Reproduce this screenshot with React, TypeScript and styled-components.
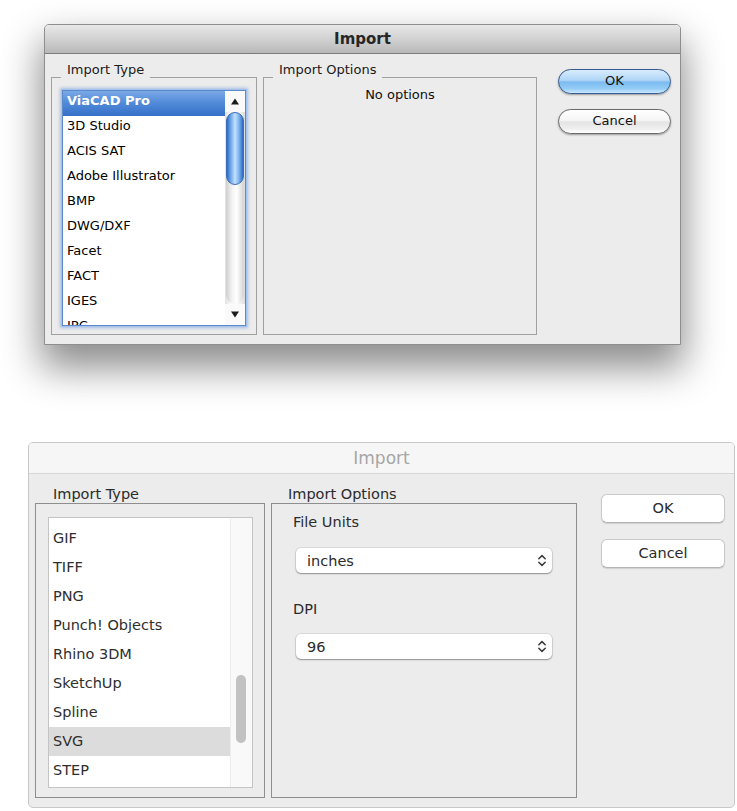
import React from "react";
import styled, { createGlobalStyle } from "styled-components";

const GlobalStyle = createGlobalStyle`
  html, body {
    margin: 0;
    padding: 0;
    background: #fff;
  }
  body {
    font-family: "DejaVu Sans", "Liberation Sans", sans-serif;
  }
  * {
    box-sizing: border-box;
  }
`;

const Page = styled.div`
  width: 737px;
  height: 811px;
  padding-top: 24px;
  overflow: hidden;
`;

/* ---------- Aqua (old) dialog ---------- */

const AquaDialog = styled.div`
  margin-left: 44px;
  width: 637px;
  height: 321px;
  display: flex;
  flex-direction: column;
  background: #ececec;
  border: 1px solid #8e8e8e;
  border-radius: 5px 5px 0 0;
  box-shadow: 0 20px 38px 3px rgba(0, 0, 0, 0.45);
`;

const AquaTitle = styled.div`
  flex: none;
  height: 29px;
  border-bottom: 1px solid #7c7c7c;
  border-radius: 4px 4px 0 0;
  background: linear-gradient(#e8e8e8, #cfcfcf 55%, #b8b8b8);
  text-align: center;
  font-size: 15px;
  font-weight: bold;
  line-height: 28px;
  color: #262626;
`;

const AquaBody = styled.div`
  flex: 1;
  display: flex;
  padding: 9px 9px 9px 6px;
`;

const AquaGroup = styled.fieldset<{ $width: number; $gap?: number }>`
  width: ${(p) => p.$width}px;
  min-width: 0;
  margin: 0 0 0 ${(p) => p.$gap ?? 0}px;
  padding: 0;
  border: 1px solid #a0a0a0;
  display: flex;
  flex-direction: column;
`;

const AquaLegend = styled.legend`
  margin-left: 9px;
  padding: 0 6px 14px;
  font-size: 13px;
  line-height: 14px;
  color: #1a1a1a;
`;

const AquaList = styled.div`
  margin: -1px 10px 0;
  height: 236px;
  display: flex;
  overflow: hidden;
  background: #fff;
  border: 1px solid #5b8bcc;
  box-shadow: 0 0 0 1px #a4c3ec, 0 0 3px 2px rgba(105, 150, 215, 0.55);
`;

const AquaRows = styled.div`
  flex: 1;
  min-width: 0;
`;

const AquaRow = styled.div<{ $selected?: boolean }>`
  height: 25px;
  padding-left: 4px;
  font-size: 13px;
  line-height: 19px;
  white-space: nowrap;
  font-weight: ${(p) => (p.$selected ? "bold" : "normal")};
  color: ${(p) => (p.$selected ? "#fff" : "#000")};
  background: ${(p) =>
    p.$selected
      ? "linear-gradient(#7aa8e6, #5089d8 50%, #3670c8)"
      : "transparent"};
`;

const AquaScroll = styled.div`
  flex: none;
  width: 20px;
  display: flex;
  flex-direction: column;
  background: linear-gradient(to right, #e2e2e2, #fdfdfd 35%, #f3f3f3 75%, #dcdcdc);
`;

const ArrowCell = styled.div`
  flex: none;
  height: 21px;
  display: flex;
  align-items: center;
  justify-content: center;
  background: #fafafa;
`;

const AquaTrack = styled.div`
  flex: 1;
  margin: 0 1px;
  border-radius: 9px;
  background: linear-gradient(to right, #cfcfcf, #f4f4f4 35%, #ffffff 60%, #d2d2d2);
`;

const AquaThumb = styled.div`
  height: 73px;
  border-radius: 9px;
  border: 1px solid #3a6db6;
  background: linear-gradient(
    to right,
    #2d6ac4,
    #72acea 25%,
    #c4e1fb 50%,
    #7ab3ee 75%,
    #2d6ac4
  );
`;

const NoOptions = styled.div`
  margin-top: -3px;
  text-align: center;
  font-size: 13px;
  line-height: 14px;
  color: #111;
`;

const AquaButtons = styled.div`
  margin: 6px 0 0 21px;
  display: flex;
  flex-direction: column;
  gap: 15px;
`;

const AquaButton = styled.button<{ $default?: boolean }>`
  width: 113px;
  height: 25px;
  padding: 0 0 3px;
  border-radius: 13px;
  font-family: "DejaVu Sans", sans-serif;
  font-size: 13px;
  color: #111;
  border: 1px solid ${(p) => (p.$default ? "#355a91" : "#6a6a6a")};
  background: ${(p) =>
    p.$default
      ? "linear-gradient(#d9ecfc 0%, #aed5f7 45%, #7cbaf0 52%, #92cbf6 80%, #cbe9fd 100%)"
      : "linear-gradient(#ffffff 0%, #f5f5f5 45%, #e4e4e4 52%, #eeeeee 80%, #ffffff 100%)"};
  box-shadow: 0 1px 2px rgba(0, 0, 0, 0.35);
`;

/* ---------- Flat (newer) dialog ---------- */

const FlatDialog = styled.div`
  margin: 97px 0 0 28px;
  width: 707px;
  height: 366px;
  display: flex;
  flex-direction: column;
  overflow: hidden;
  background: #ececec;
  border: 1px solid #c8c8c8;
  border-radius: 5px;
`;

const FlatTitle = styled.div`
  flex: none;
  height: 31px;
  border-bottom: 1px solid #d6d6d6;
  background: #f6f6f6;
  text-align: center;
  font-size: 17px;
  line-height: 30px;
  color: #a6a6a6;
`;

const FlatBody = styled.div`
  flex: 1;
  display: flex;
  padding: 12px 9px 9px 6px;
`;

const FlatGroup = styled.section<{ $width: number; $gap?: number }>`
  width: ${(p) => p.$width}px;
  margin-left: ${(p) => p.$gap ?? 0}px;
  display: flex;
  flex-direction: column;
`;

const FlatLabel = styled.div<{ $indent: number }>`
  margin-left: ${(p) => p.$indent}px;
  font-size: 14.5px;
  line-height: 17px;
  color: #2b2b2b;
`;

const FlatBox = styled.div`
  flex: 1;
  display: flex;
  flex-direction: column;
  border: 1px solid #8e8e8e;
`;

const FlatList = styled.div`
  flex: 1;
  margin: 13px 11px 9px 12px;
  display: flex;
  overflow: hidden;
  background: #fff;
  border: 1px solid #c4c4c4;
`;

const FlatViewport = styled.div`
  flex: 1;
  min-width: 0;
  overflow: hidden;
`;

const FlatRows = styled.div<{ $offset: number }>`
  margin-top: ${(p) => -p.$offset}px;
`;

const FlatRow = styled.div<{ $selected?: boolean }>`
  height: 29px;
  padding-left: 4px;
  font-size: 14.5px;
  line-height: 29px;
  white-space: nowrap;
  color: #2e2e2e;
  background: ${(p) => (p.$selected ? "#dcdcdc" : "transparent")};
`;

const FlatTrack = styled.div`
  flex: none;
  width: 22px;
  padding: 157px 0 0 5px;
  background: #f9f9f9;
  border-left: 1px solid #ededed;
`;

const FlatThumb = styled.div`
  width: 10px;
  height: 68px;
  border-radius: 5px;
  background: #c2c2c2;
`;

const OptionsPane = styled.div`
  padding: 10px 0 0 21px;
  display: flex;
  flex-direction: column;
  align-items: flex-start;
`;

const FieldLabel = styled.div<{ $top: number }>`
  margin-top: ${(p) => p.$top}px;
  font-size: 14.5px;
  line-height: 16px;
  color: #2b2b2b;
`;

const Select = styled.div<{ $top: number }>`
  margin: ${(p) => p.$top}px 0 0 3px;
  width: 256px;
  height: 25px;
  padding: 0 5px 0 11px;
  display: flex;
  align-items: center;
  justify-content: space-between;
  background: #fff;
  border-radius: 5px;
  box-shadow: 0 0 0 1px rgba(0, 0, 0, 0.07), 0 1px 1.5px rgba(0, 0, 0, 0.35);
  font-size: 14.5px;
  color: #2b2b2b;
`;

const FlatButtons = styled.div`
  margin: 8px 0 0 24px;
  display: flex;
  flex-direction: column;
  gap: 16px;
`;

const FlatButton = styled.button`
  width: 124px;
  height: 29px;
  padding: 0 0 2px;
  background: #fff;
  border: 1px solid #c9c9c9;
  border-bottom-color: #b4b4b4;
  border-radius: 6px;
  box-shadow: 0 1px 1px rgba(0, 0, 0, 0.12);
  font-family: "DejaVu Sans", sans-serif;
  font-size: 14.5px;
  color: #2b2b2b;
`;

/* ---------- icons ---------- */

const Triangle = ({ down }: { down?: boolean }) => (
  <svg width="8" height="7" viewBox="0 0 8 7">
    <polygon points={down ? "0,0.5 8,0.5 4,6.5" : "0,6.5 8,6.5 4,0.5"} fill="#1c1c1c" />
  </svg>
);

const UpDown = () => (
  <svg width="10" height="15" viewBox="0 0 10 15">
    <path
      d="M1.8 5.8 L5 2.6 L8.2 5.8 M1.8 9.2 L5 12.4 L8.2 9.2"
      fill="none"
      stroke="#3a3a3a"
      strokeWidth="1.5"
      strokeLinecap="round"
      strokeLinejoin="round"
    />
  </svg>
);

const oldTypes = [
  "ViaCAD Pro",
  "3D Studio",
  "ACIS SAT",
  "Adobe Illustrator",
  "BMP",
  "DWG/DXF",
  "Facet",
  "FACT",
  "IGES",
  "IPC",
];

const newTypes = [
  "JPEG",
  "GIF",
  "TIFF",
  "PNG",
  "Punch! Objects",
  "Rhino 3DM",
  "SketchUp",
  "Spline",
  "SVG",
  "STEP",
];

export default function App() {
  return (
    <Page>
      <GlobalStyle />

      <AquaDialog>
        <AquaTitle>Import</AquaTitle>
        <AquaBody>
          <AquaGroup $width={206}>
            <AquaLegend>Import Type</AquaLegend>
            <AquaList>
              <AquaRows>
                {oldTypes.map((t, i) => (
                  <AquaRow key={t} $selected={i === 0}>
                    {t}
                  </AquaRow>
                ))}
              </AquaRows>
              <AquaScroll>
                <ArrowCell>
                  <Triangle />
                </ArrowCell>
                <AquaTrack>
                  <AquaThumb />
                </AquaTrack>
                <ArrowCell>
                  <Triangle down />
                </ArrowCell>
              </AquaScroll>
            </AquaList>
          </AquaGroup>
          <AquaGroup $width={274} $gap={6}>
            <AquaLegend>Import Options</AquaLegend>
            <NoOptions>No options</NoOptions>
          </AquaGroup>
          <AquaButtons>
            <AquaButton $default>OK</AquaButton>
            <AquaButton>Cancel</AquaButton>
          </AquaButtons>
        </AquaBody>
      </AquaDialog>

      <FlatDialog>
        <FlatTitle>Import</FlatTitle>
        <FlatBody>
          <FlatGroup $width={230}>
            <FlatLabel $indent={18}>Import Type</FlatLabel>
            <FlatBox>
              <FlatList>
                <FlatViewport>
                  <FlatRows $offset={23}>
                    {newTypes.map((t) => (
                      <FlatRow key={t} $selected={t === "SVG"}>
                        {t}
                      </FlatRow>
                    ))}
                  </FlatRows>
                </FlatViewport>
                <FlatTrack>
                  <FlatThumb />
                </FlatTrack>
              </FlatList>
            </FlatBox>
          </FlatGroup>
          <FlatGroup $width={306} $gap={6}>
            <FlatLabel $indent={17}>Import Options</FlatLabel>
            <FlatBox>
              <OptionsPane>
                <FieldLabel $top={0}>File Units</FieldLabel>
                <Select $top={18}>
                  <span>inches</span>
                  <UpDown />
                </Select>
                <FieldLabel $top={28}>DPI</FieldLabel>
                <Select $top={17}>
                  <span>96</span>
                  <UpDown />
                </Select>
              </OptionsPane>
            </FlatBox>
          </FlatGroup>
          <FlatButtons>
            <FlatButton>OK</FlatButton>
            <FlatButton>Cancel</FlatButton>
          </FlatButtons>
        </FlatBody>
      </FlatDialog>
    </Page>
  );
}
